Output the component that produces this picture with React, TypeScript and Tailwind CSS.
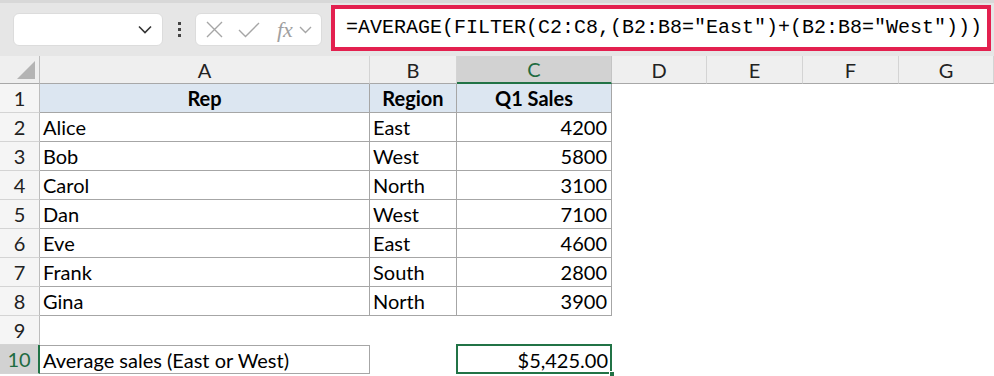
import React from 'react';

const cols = ['A', 'B', 'C', 'D', 'E', 'F', 'G'];

const data: [string, string, string][] = [
  ['Alice', 'East', '4200'],
  ['Bob', 'West', '5800'],
  ['Carol', 'North', '3100'],
  ['Dan', 'West', '7100'],
  ['Eve', 'East', '4600'],
  ['Frank', 'South', '2800'],
  ['Gina', 'North', '3900'],
];

const font = { fontFamily: 'Lato, "Liberation Sans", sans-serif' };

function RowHead({ n, active }: { n: number; active?: boolean }) {
  return (
    <div
      className={
        active
          ? 'h-[29px] flex items-center justify-center bg-[#d2d2d2] text-[#1e6b41] border-r-2 border-r-[#217346] border-b border-b-[#d4d4d4]'
          : 'h-[29px] flex items-center justify-center bg-[#f5f5f5] text-[#222] border-r border-r-[#bdbdbd] border-b border-b-[#d4d4d4]'
      }
    >
      {n}
    </div>
  );
}

function Blank() {
  return <div className="h-[29px] bg-white" />;
}

export default function App() {
  return (
    <div className="w-[994px] h-[376px] overflow-hidden bg-white text-[20px] text-black" style={font}>
      {/* formula bar strip */}
      <div className="h-[56px] bg-[#e6e6e6] flex items-center border-t-[3px] border-t-[#d8d8d8]">
        <div className="ml-[13px] w-[150px] h-[33px] bg-white rounded-md border border-[#dcdcdc] flex items-center justify-end pr-[10px]">
          <svg width="14" height="9" viewBox="0 0 14 9" fill="none" stroke="#333" strokeWidth="1.6">
            <path d="M1 1.5 L7 7.5 L13 1.5" />
          </svg>
        </div>
        <div className="w-[32px] flex flex-col items-center gap-[3px]">
          <span className="w-[3px] h-[3px] bg-[#444]" />
          <span className="w-[3px] h-[3px] bg-[#444]" />
          <span className="w-[3px] h-[3px] bg-[#444]" />
        </div>
        <div className="w-[127px] h-[33px] bg-white rounded-md border border-[#dcdcdc] flex items-center">
          <svg className="ml-[10px]" width="17" height="17" viewBox="0 0 17 17" fill="none" stroke="#a6a6a6" strokeWidth="1.4">
            <path d="M1 1 L16 16 M16 1 L1 16" />
          </svg>
          <svg className="ml-[15px]" width="22" height="16" viewBox="0 0 22 16" fill="none" stroke="#a6a6a6" strokeWidth="1.4">
            <path d="M1 8 L7.5 14.5 L21 1" />
          </svg>
          <span
            className="ml-[17px] text-[22px] italic text-[#a0a0a0] leading-none"
            style={{ fontFamily: '"Liberation Serif", serif' }}
          >
            fx
          </span>
          <svg className="ml-[6px]" width="13" height="8" viewBox="0 0 13 8" fill="none" stroke="#a6a6a6" strokeWidth="1.4">
            <path d="M1 1 L6.5 6.5 L12 1" />
          </svg>
        </div>
        <div className="ml-[9px] w-[660px] h-[46px] -mt-[3px] border-4 border-[#e3204f] bg-white flex items-center pl-[11px]">
          <span className="text-[20px] text-black whitespace-nowrap" style={{ fontFamily: '"Liberation Mono", monospace' }}>
            =AVERAGE(FILTER(C2:C8,(B2:B8="East")+(B2:B8="West")))
          </span>
        </div>
      </div>

      {/* sheet */}
      <div className="grid grid-cols-[40px_330px_87px_155px_95px_96px_96px_95px]">
        {/* column headers */}
        <div className="h-[28px] bg-[#efefef] border-r border-r-[#bdbdbd] border-b border-b-[#a8a8a8] relative">
          <svg className="absolute right-[4px] bottom-[4px]" width="18" height="18" viewBox="0 0 18 18">
            <path d="M18 0 L18 18 L0 18 Z" fill="#b4b4b4" />
          </svg>
        </div>
        {cols.map((c) =>
          c === 'C' ? (
            <div
              key={c}
              className="h-[28px] bg-[#d2d2d2] text-[#1e6b41] flex items-center justify-center border-r border-r-[#c4c4c4] border-b-2 border-b-[#217346]"
            >
              {c}
            </div>
          ) : (
            <div
              key={c}
              className="h-[28px] bg-[#efefef] text-[#222] flex items-center justify-center border-r border-r-[#d4d4d4] border-b border-b-[#a8a8a8]"
            >
              {c}
            </div>
          )
        )}

        {/* row 1 */}
        <RowHead n={1} />
        <div className="h-[29px] bg-[#dce6f1] font-bold flex items-center justify-center border-r border-b border-[#a6a6a6]">Rep</div>
        <div className="h-[29px] bg-[#dce6f1] font-bold flex items-center justify-center border-r border-b border-[#a6a6a6]">Region</div>
        <div className="h-[29px] bg-[#dce6f1] font-bold flex items-center justify-center border-r border-b border-[#a6a6a6]">Q1 Sales</div>
        <Blank />
        <Blank />
        <Blank />
        <Blank />

        {data.map(([rep, region, sales], i) => (
          <React.Fragment key={rep}>
            <RowHead n={i + 2} />
            <div className="h-[29px] flex items-center pl-[3px] border-r border-b border-[#a6a6a6]">{rep}</div>
            <div className="h-[29px] flex items-center pl-[3px] border-r border-b border-[#a6a6a6]">{region}</div>
            <div className="h-[29px] flex items-center justify-end pr-[4px] border-r border-b border-[#a6a6a6]">{sales}</div>
            <Blank />
            <Blank />
            <Blank />
            <Blank />
          </React.Fragment>
        ))}

        {/* row 9 */}
        <RowHead n={9} />
        <Blank />
        <Blank />
        <Blank />
        <Blank />
        <Blank />
        <Blank />
        <Blank />

        {/* row 10 */}
        <RowHead n={10} active />
        <div className="h-[29px] flex items-center pl-[3px] border-t border-r border-b border-[#a6a6a6]">Average sales (East or West)</div>
        <Blank />
        <div className="h-[29px] relative flex items-center justify-end pr-[4px]">
          <div className="absolute -left-px -top-px right-0 bottom-0 border-2 border-[#217346]" />
          <div className="absolute -right-[3px] -bottom-[3px] w-[6px] h-[6px] bg-[#217346] border border-white" />
          <span className="relative">$5,425.00</span>
        </div>
        <Blank />
        <Blank />
        <Blank />
        <Blank />
      </div>
    </div>
  );
}
